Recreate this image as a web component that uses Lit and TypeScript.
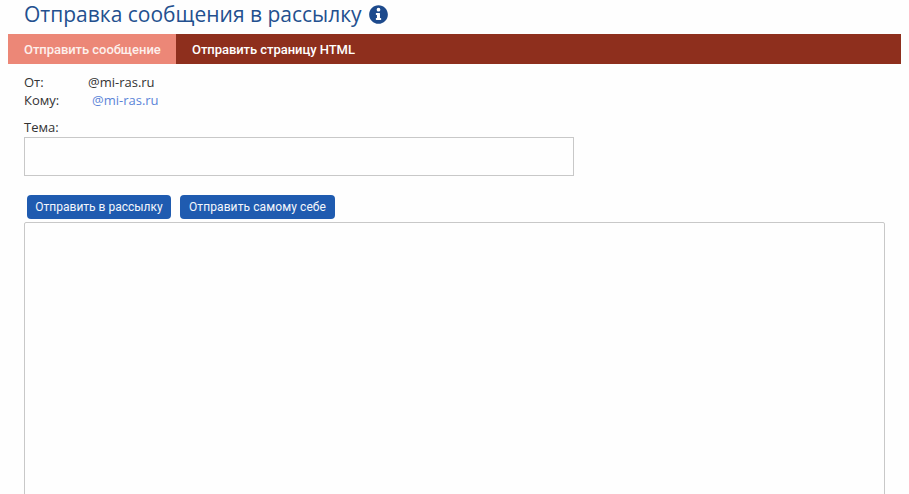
import { LitElement, html, css } from "lit";
import { customElement } from "lit/decorators.js";

@customElement("app-root")
export class AppRoot extends LitElement {
  static styles = css`
    :host {
      display: block;
      width: 909px;
      height: 494px;
      overflow: hidden;
      background: #fefefe;
      font-family: "Open Sans", "Noto Sans", sans-serif;
      font-size: 13px;
      color: #333;
    }
    .page {
      display: flex;
      flex-direction: column;
      padding: 0 8px;
      width: 893px;
    }
    .title {
      display: flex;
      align-items: center;
      gap: 7px;
      height: 34px;
      padding: 0 16px 6px;
      box-sizing: border-box;
      margin: 0;
      font-size: 21px;
      font-weight: 400;
      color: #23508f;
      white-space: nowrap;
    }
    .title svg { width: 19px; height: 19px; flex: none; }
    .tabs {
      display: flex;
      height: 30px;
      background: #8e2f1d;
      font-family: Roboto, "Noto Sans", sans-serif;
      font-size: 13px;
      font-weight: 500;
      letter-spacing: -0.05px;
      color: #fff;
      white-space: nowrap;
    }
    .tab {
      display: flex;
      align-items: center;
      padding: 0 16px;
    }
    .tab.active { background: #ec8777; width: 168px; box-sizing: border-box; color: #fdf0ec; }
    .body { padding: 0 16px; display: flex; flex-direction: column; }
    .meta { display: flex; flex-direction: column; margin-top: 9px; line-height: 18px; }
    .row { display: flex; }
    .from { width: 64px; }
    .to { width: 68px; }
    .link { color: #5b84d8; }
    .label { margin-top: 9px; line-height: 18px; height: 19px; }
    .subject {
      width: 550px;
      height: 39px;
      box-sizing: border-box;
      border: 1px solid #c8c8c8;
      background: #fefefe;
      display: block;
    }
    .buttons {
      display: flex;
      gap: 9px;
      padding: 19px 3px 3px;
    }
    button {
      height: 24px;
      padding: 0;
      border: none;
      border-radius: 4px;
      background: #1f5bb0;
      color: #f4f7fc;
      font: 400 12px Roboto, "Noto Sans", sans-serif;
      white-space: nowrap;
    }
    .send-list { width: 144px; }
    .send-self { width: 155px; letter-spacing: 0.1px; }
    .editor {
      width: 861px;
      height: 300px;
      box-sizing: border-box;
      border: 1px solid #c8c8c8;
      border-radius: 2px 2px 0 0;
      background: #fefefe;
      display: block;
      resize: none;
    }
  `;

  render() {
    return html`
      <div class="page">
        <h1 class="title">
          Отправка сообщения в рассылку
          <svg viewBox="0 0 512 512" aria-hidden="true">
            <path fill="#1d4a8c" fill-rule="evenodd" d="M256 4C117 4 4 117 4 256s113 252 252 252 252-113 252-252S395 4 256 4zM256 76a50 50 0 1 1 0 100 50 50 0 0 1 0-100zM328 392c0 8-6 14-14 14H198c-8 0-14-6-14-14v-30c0-8 6-14 14-14h16v-76h-16c-8 0-14-6-14-14v-30c0-8 6-14 14-14h84c8 0 14 6 14 14v120h18c8 0 14 6 14 14z"/>
          </svg>
        </h1>
        <div class="tabs">
          <div class="tab active">Отправить сообщение</div>
          <div class="tab">Отправить страницу HTML</div>
        </div>
        <div class="body">
          <div class="meta">
            <div class="row"><span class="from">От:</span><span>@mi-ras.ru</span></div>
            <div class="row"><span class="to">Кому:</span><span class="link">@mi-ras.ru</span></div>
          </div>
          <div class="label">Тема:</div>
          <input class="subject" type="text" />
          <div class="buttons">
            <button class="send-list">Отправить в рассылку</button>
            <button class="send-self">Отправить самому себе</button>
          </div>
          <textarea class="editor"></textarea>
        </div>
      </div>
    `;
  }
}
